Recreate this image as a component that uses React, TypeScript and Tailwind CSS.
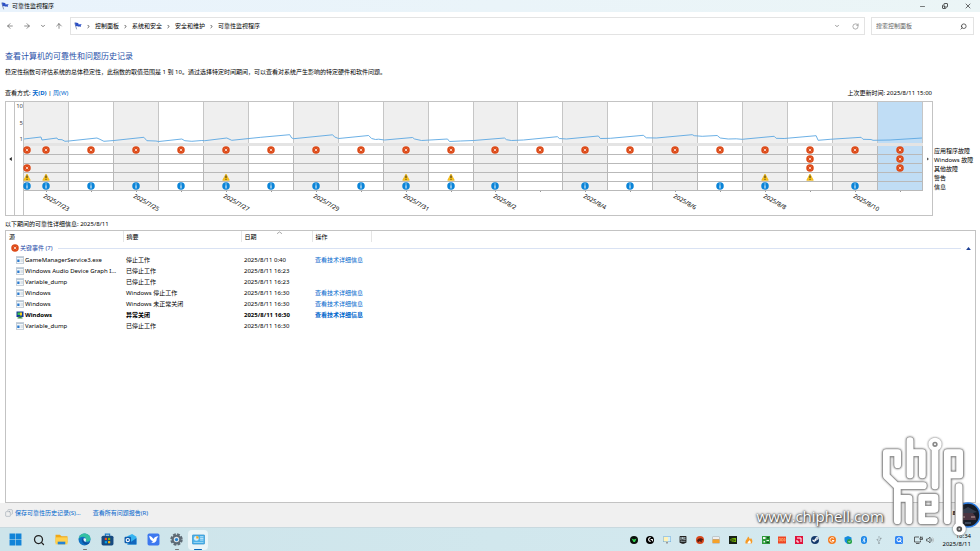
import React, { useState } from "react";
import {
  ArrowLeft,
  ArrowRight,
  ArrowUp,
  ChevronDown,
  ChevronRight,
  Copy,
  Minus,
  RotateCw,
  Search,
  X,
} from "lucide-react";
import { FaBluetoothB, FaSteamSymbol, FaUsb } from "react-icons/fa";
import { SiNvidia, SiLogitechg, SiEpicgames } from "react-icons/si";

type Day = {
  label?: string;
  app?: boolean;
  win?: boolean;
  other?: boolean;
  warn?: boolean;
  info?: boolean;
};

const days: Day[] = [
  { label: "2025/7/23", app: true, warn: true, info: true },
  { app: true, info: true },
  { label: "2025/7/25", app: true, info: true },
  { app: true, info: true },
  { label: "2025/7/27", app: true, warn: true, info: true },
  { app: true, info: true },
  { label: "2025/7/29", app: true, info: true },
  { app: true, info: true },
  { label: "2025/7/31", app: true, warn: true, info: true },
  { app: true, warn: true, info: true },
  { label: "2025/8/2", app: true, info: true },
  { app: true },
  { label: "2025/8/4", app: true, info: true },
  { app: true, info: true },
  { label: "2025/8/6", app: true },
  { app: true, info: true },
  { label: "2025/8/8", app: true, warn: true, info: true },
  { app: true, win: true, other: true, warn: true },
  { label: "2025/8/10", app: true, info: true },
  { app: true, win: true, other: true },
];

const events = [
  { source: "GameManagerService3.exe", summary: "停止工作", date: "2025/8/11 0:40", link: true },
  { source: "Windows Audio Device Graph I...", summary: "已停止工作", date: "2025/8/11 16:23" },
  { source: "Variable_dump", summary: "已停止工作", date: "2025/8/11 16:23" },
  { source: "Windows", summary: "Windows 停止工作", date: "2025/8/11 16:30", link: true },
  { source: "Windows", summary: "Windows 未正常关闭", date: "2025/8/11 16:30", link: true },
  { source: "Windows", summary: "异常关闭", date: "2025/8/11 16:30", link: true, bold: true },
  { source: "Variable_dump", summary: "已停止工作", date: "2025/8/11 16:30" },
];

const stabilityLine =
  "23,139 40,137 41,140 56,138 57,139.5 61,139.7 64,141.3 68,141 96,138 99,139.3 103,141.3 113,140.5 143,137.3 146,140.7 155,141 158,141.5 181,139 184,140.7 191,141.3 201,140.5 204,140.7 226,138 231,140.3 260,137.3 289,134.7 291,138 293,138.7 332,134.8 334,137 338,138.5 368,135.5 371,138.5 375,139.5 378,139.2 384,140 412,137.5 414,139 421,140.5 447,139 449,141.5 460,141 473,140.5 504,138 506,139.7 511,140.5 523,140 557,136.7 559,138.5 566,139 598,136 600,138.5 610,138.3 643,135.3 646,137.8 656,138 692,134.7 694,135.7 702,136.3 717,135.5 720,138 728,139 736,138.8 742,139.3 774,136.3 776,138.3 784,138.5 816,135.7 818,140.3 830,139.3 861,137.3 863,139.3 871,139.5 873,140.3 890,140 922,138";

function Flag() {
  return (
    <svg viewBox="0 0 24 24" className="size-2 shrink-0">
      <path d="M2 2l6 20" stroke="#7c8aa8" strokeWidth="2.5" />
      <path d="M3 2c4-2 6 2 10 1v4c3 1 6-1 10 0l-3 4 1 3c-5 0-6-1-9 0l-2-2-5 1z" fill="#2c50c4" />
    </svg>
  );
}

function ErrorIcon() {
  return (
    <svg viewBox="0 0 16 16" className="size-2 shrink-0">
      <circle cx="8" cy="8" r="7.5" fill="#dd4a18" />
      <path d="M5.500 5.500l5 5m0-5l-5 5" stroke="#ffe9e0" strokeWidth="1.600" />
    </svg>
  );
}

function WarnIcon() {
  return (
    <svg viewBox="0 0 16 16" className="size-2 shrink-0">
      <path d="M8 2l6.5 12.5h-13z" fill="#fcc419" stroke="#eab010" strokeWidth="1.500" strokeLinejoin="round" />
      <path d="M8 5v5m0 1.500v2" stroke="#222" strokeWidth="2" />
    </svg>
  );
}

function InfoIcon() {
  return (
    <svg viewBox="0 0 16 16" className="size-2 shrink-0">
      <circle cx="8" cy="8" r="7.5" fill="#0a84d8" />
      <path d="M8 3v2m0 1.500v6.500" stroke="#fff" strokeWidth="2" />
    </svg>
  );
}

function AppIcon({ bold }: { bold?: boolean }) {
  if (bold) {
    return (
      <svg viewBox="0 0 16 16" className="size-2 shrink-0">
        <rect x="1" y="1" width="14" height="11" fill="#123a9c" />
        <path d="M3 3h5v5H3z" fill="#3fc04a" />
        <path d="M8 3h4v6H8z" fill="#f3d31c" />
        <path d="M5 11h6v2h2v2H3v-2h2z" fill="#3f8c3c" />
      </svg>
    );
  }
  return (
    <svg viewBox="0 0 16 16" className="size-2 shrink-0">
      <rect x="0.500" y="1.500" width="15" height="13" fill="#f4f8fb" stroke="#93a3b3" />
      <path d="M1 2h14v2H1z" fill="#b8c8d6" />
      <rect x="2.500" y="7" width="4.500" height="5" fill="#2b7bd0" />
      <path d="M9 7h5M9 9h5M9 11h5" stroke="#c3ccd4" />
    </svg>
  );
}

function Cell({ children }: { children?: React.ReactNode }) {
  return (
    <div className="flex h-[9px] items-center justify-center border-b border-[#b9b9b9]">
      {children}
    </div>
  );
}

function DayColumn({ day, index }: { day: Day; index: number }) {
  const fill = index === 19 ? "bg-[#c0ddf5]" : index % 2 === 0 ? "bg-[#efefef]" : "bg-white";
  return (
    <div className="relative">
      <div className={`h-[41px] border-r border-[#c6c6c6] ${fill}`} />
      <div className="h-[3px] bg-[#e4e4e4]" />
      <div className={`border-r border-[#b9b9b9] ${fill}`}>
        <Cell>{day.app && <ErrorIcon />}</Cell>
        <Cell>{day.win && <ErrorIcon />}</Cell>
        <Cell>{day.other && <ErrorIcon />}</Cell>
        <Cell>{day.warn && <WarnIcon />}</Cell>
        <Cell>{day.info && <InfoIcon />}</Cell>
      </div>
      {/* events of the day that is cut off at the left edge */}
      {index === 0 && (
        <div className="absolute top-11 -left-px flex flex-col gap-px">
          <ErrorIcon />
          <span className="h-2" />
          <ErrorIcon />
          <WarnIcon />
          <InfoIcon />
        </div>
      )}
      <div className="h-6">
        <div className="mx-auto h-px w-px bg-[#999]" />
        {day.label && (
          <span className="absolute left-1/2 origin-top-left rotate-30 whitespace-nowrap">
            {day.label}
          </span>
        )}
      </div>
    </div>
  );
}

function Chart() {
  return (
    <div className="flex pr-1">
      <div className="flex flex-1 border border-[#c3c3c3] bg-white">
        <button aria-label="向前" className="flex w-[9px] items-center justify-center border-r border-[#c3c3c3]">
          <svg viewBox="0 0 4 6" className="h-1 w-[3px]">
            <path d="M4 0v6L0 3z" fill="#222" />
          </svg>
        </button>
        <div className="flex h-[41px] w-2 flex-col justify-between text-right leading-2 text-[#444]">
          <span className="-ml-1">10</span>
          <span>5</span>
          <span>1</span>
        </div>
        <div className="relative grid flex-1 grid-cols-[repeat(20,minmax(0,1fr))] border-l border-[#c3c3c3]">
          {days.map((day, i) => (
            <DayColumn key={i} day={day} index={i} />
          ))}
          <svg
            viewBox="23 102 900 41"
            preserveAspectRatio="none"
            className="absolute top-0 left-0 h-[41px] w-full"
          >
            <polyline points={stabilityLine} fill="none" stroke="#5ba7e2" strokeWidth="0.9" />
          </svg>
        </div>
        <button aria-label="向后" className="flex w-[9px] items-center justify-center">
          <svg viewBox="0 0 4 6" className="h-1 w-[2px]">
            <path d="M0 0v6l4-3z" fill="#555" />
          </svg>
        </button>
      </div>
      <ul className="w-[43px] pt-[46px] pl-px leading-[9px] whitespace-nowrap">
        <li>应用程序故障</li>
        <li>Windows 故障</li>
        <li>其他故障</li>
        <li>警告</li>
        <li>信息</li>
      </ul>
    </div>
  );
}

function EventTable() {
  const [open, setOpen] = useState(true);
  return (
    <div className="mr-1 flex-1 border border-[#c3c3c3] bg-white">
      <table className="w-full table-fixed border-collapse text-left">
        <thead>
          <tr className="h-[11px]">
            <th className="w-[117px] border-r border-[#e5e5e5] pl-[3px] font-normal">源</th>
            <th className="w-[118px] border-r border-[#e5e5e5] pl-[3px] font-normal">摘要</th>
            <th className="relative w-[71px] border-r border-[#e5e5e5] pl-[3px] font-normal">
              日期
              <svg viewBox="0 0 8 4" className="absolute top-0 left-1/2 h-[3px] w-[5px]">
                <path d="M0 4l4-3 4 3" fill="none" stroke="#777" />
              </svg>
            </th>
            <th className="w-[59px] border-r border-[#e5e5e5] pl-[3px] font-normal">操作</th>
            <th />
          </tr>
        </thead>
        <tbody>
          <tr className="h-3">
            <td colSpan={5}>
              <button
                onClick={() => setOpen(!open)}
                className="flex w-full items-center gap-px pr-1 pl-[5px] text-[#2448a8]"
              >
                <ErrorIcon />
                <span>关键事件 (7)</span>
                <span className="mx-1 h-px flex-1 bg-[#d9e2f3]" />
                <svg viewBox="0 0 8 5" className="h-[3px] w-[5px]">
                  <path d="M0 5l4-5 4 5z" fill="#1c3f94" />
                </svg>
              </button>
            </td>
          </tr>
          {open &&
            events.map((event, i) => (
              <tr key={i} className={`h-[11px] ${event.bold ? "font-bold" : ""}`}>
                <td className="pl-[10px]">
                  <div className="flex items-center gap-px">
                    <AppIcon bold={event.bold} />
                    <span className="whitespace-nowrap">{event.source}</span>
                  </div>
                </td>
                <td className="pl-[3px]">{event.summary}</td>
                <td className="pl-[3px] whitespace-nowrap">{event.date}</td>
                <td className="pl-[3px] whitespace-nowrap">
                  {event.link && (
                    <a href="#" className="text-[#0066cc]">
                      查看技术详细信息
                    </a>
                  )}
                </td>
                <td />
              </tr>
            ))}
        </tbody>
      </table>
    </div>
  );
}

function AddressBar() {
  const crumbs = ["控制面板", "系统和安全", "安全和维护", "可靠性监视程序"];
  return (
    <nav className="flex items-center gap-[6px] px-[6px] pt-[5px]">
      <div className="flex w-[58px] items-center justify-between pr-px text-[#555]">
        <button aria-label="后退"><ArrowLeft className="size-2" /></button>
        <button aria-label="前进"><ArrowRight className="size-2" /></button>
        <button aria-label="最近"><ChevronDown className="size-[6px]" strokeWidth={3} /></button>
        <button aria-label="向上"><ArrowUp className="size-2" /></button>
      </div>
      <div className="flex h-[18px] flex-1 items-center border border-[#e3e3e3] pr-[5px] pl-[3px]">
        <Flag />
        {crumbs.map((crumb) => (
          <React.Fragment key={crumb}>
            <ChevronRight className="mx-1 size-[5px]" strokeWidth={3} />
            <a href="#">{crumb}</a>
          </React.Fragment>
        ))}
        <button aria-label="历史" className="ml-auto text-[#777]"><ChevronDown className="size-[6px]" strokeWidth={3} /></button>
        <button aria-label="刷新" className="ml-3 text-[#777]"><RotateCw className="size-[7px]" /></button>
      </div>
      <label className="flex h-[18px] w-[103px] items-center border border-[#e3e3e3] px-1">
        <input
          type="text"
          aria-label="搜索"
          placeholder="搜索控制面板"
          className="min-w-0 flex-1 outline-none placeholder:text-[#666]"
        />
        <Search className="mr-[2px] size-[7px] -scale-x-100 text-[#333]" strokeWidth={2.5} />
      </label>
    </nav>
  );
}

const pinned = [
  {
    name: "开始",
    icon: (
      <svg viewBox="0 0 24 24" className="size-[13px]">
        <path d="M1 1h10.500v10.500H1zM12.500 1H23v10.500H12.500zM1 12.500h10.500V23H1zM12.500 12.500H23V23H12.500z" fill="#1284d8" />
      </svg>
    ),
  },
  { name: "搜索", icon: <Search className="size-3 text-[#222]" strokeWidth={2.5} /> },
  {
    name: "文件资源管理器",
    icon: (
      <svg viewBox="0 0 24 24" className="size-[13px]">
        <path d="M1 3h8l3 3h11v12H1z" fill="#f0a818" />
        <path d="M1 8h22v13H1z" fill="#ffd04c" />
        <path d="M5 16h14v5H5z" fill="#2583d4" />
      </svg>
    ),
  },
  {
    name: "Edge",
    running: true,
    icon: (
      <svg viewBox="0 0 24 24" className="size-[13px]">
        <circle cx="12" cy="12" r="11" fill="#1173c4" />
        <path d="M1 12C2 4 7 1 12 1c6 0 11 4 11 9 0 4-3 6-6 6-4 0-2-2-2-4 0-3-3-5-6-5-4 0-7 2-8 5z" fill="#35c1a2" />
        <path d="M9 9c-4 4-1 11 6 12 3 0 5-1 7-4-7 3-12-1-11-6z" fill="#0c4f9c" />
        <path d="M10 11c0-2 5-2 5 1 0 2-2 3 1 4-4 1-6-2-6-5z" fill="#e8f6fa" />
      </svg>
    ),
  },
  {
    name: "Microsoft Store",
    icon: (
      <svg viewBox="0 0 24 24" className="size-[13px]">
        <path d="M8 6V2h8v4" fill="none" stroke="#1878c8" strokeWidth="2" />
        <rect x="1" y="5" width="22" height="18" rx="3" fill="#174a80" />
        <path d="M7 9h4v4H7z" fill="#f25022" />
        <path d="M13 9h4v4h-4z" fill="#7fba00" />
        <path d="M7 15h4v4H7z" fill="#00a4ef" />
        <path d="M13 15h4v4h-4z" fill="#ffb900" />
      </svg>
    ),
  },
  {
    name: "Outlook",
    icon: (
      <svg viewBox="0 0 24 24" className="size-[13px]">
        <path d="M6 6l9-4 8 5v14H6z" fill="#35b3f0" />
        <path d="M6 21l17-12v12z" fill="#1267bd" />
        <rect x="1" y="7" width="12" height="12" rx="2" fill="#0f5cae" />
        <circle cx="7" cy="13" r="3" fill="none" stroke="#fff" strokeWidth="2" />
      </svg>
    ),
  },
  {
    name: "迅雷",
    icon: (
      <svg viewBox="0 0 24 24" className="size-[13px]">
        <rect x="1" y="1" width="22" height="22" rx="3" fill="#3c78ef" />
        <path d="M4 5c4 1 6 3 8 6 2-3 4-5 9-5l-3 4c0 6-4 9-10 8l3-3c-4-1-6-4-7-10z" fill="#fff" />
      </svg>
    ),
  },
  {
    name: "设置",
    running: true,
    icon: (
      <svg viewBox="0 0 24 24" className="size-[13px]">
        <circle cx="12" cy="12" r="9.500" fill="none" stroke="#5e6b75" strokeWidth="4" strokeDasharray="5 2.460" />
        <circle cx="12" cy="12" r="7" fill="#dfe5e9" stroke="#5e6b75" strokeWidth="4" />
        <circle cx="12" cy="12" r="3" fill="#2483d0" />
      </svg>
    ),
  },
];

function ControlPanelIcon() {
  return (
    <svg viewBox="0 0 24 24" className="size-[13px]">
      <rect x="0.500" y="3.500" width="23" height="17" rx="1.500" fill="#4db3ea" stroke="#1c7fc0" />
      <circle cx="8" cy="10" r="4.500" fill="#d8effb" />
      <path d="M8 10V5.500A4.500 4.500 0 0112.500 10z" fill="#f2a51c" />
      <path d="M15 7h6M15 10h6M15 13h6" stroke="#dff2fc" strokeWidth="1.500" />
      <path d="M3 17.500h18" stroke="#a8dcf6" strokeWidth="1.500" />
    </svg>
  );
}

function Tray() {
  return (
    <div className="flex w-[254px] items-center justify-between">
      <svg viewBox="0 0 16 16" className="size-2">
        <circle cx="8" cy="8" r="8" fill="#0b0f0b" />
        <path d="M3 5l5 2 5-2-3 7H7z" fill="#2fd04f" />
      </svg>
      <span className="flex size-2 items-center justify-center rounded-full bg-black text-white"><SiLogitechg className="size-[5px]" /></span>
      <svg viewBox="0 0 16 16" className="size-2">
        <path d="M0 1h16v11H0z" fill="#6aa8d8" />
        <path d="M1 2h9v9H1z" fill="#fff2b8" />
        <path d="M10 2h5v9h-5z" fill="#d5effb" />
        <path d="M6 12h4v3H6z" fill="#999" />
      </svg>
      <SiEpicgames className="size-2 text-[#222]" />
      <svg viewBox="0 0 16 16" className="size-2">
        <circle cx="8" cy="8" r="8" fill="#d9481c" />
        <path d="M2 9c3-5 9-6 13-1l-4 1 1 4-5-3-3 3z" fill="#521c12" />
      </svg>
      <svg viewBox="0 0 16 16" className="size-2">
        <path d="M1 1h14v14H1z" fill="#a8a8a8" />
        <path d="M2 2h12v4H2z" fill="#eee" />
        <path d="M1 7h14v7H1z" fill="#f5a22b" />
      </svg>
      <span className="flex size-2 items-center justify-center bg-[#172017] text-[#76b900]"><SiNvidia className="size-[6px]" /></span>
      <svg viewBox="0 0 16 16" className="size-2">
        <path d="M1 15C0 7 5 7 6 1c3 2 3 5 4 6l2-3c4 5 3 9 1 11z" fill="#f79a25" />
        <path d="M5 15c0-4 3-4 4-7 3 3 3 5 2 7z" fill="#fff" />
      </svg>
      <svg viewBox="0 0 16 16" className="size-2">
        <path d="M0 0h16v16H0z" fill="#2f9b3c" />
        <path d="M2 2h5v4H2zM9 8h5v2H9zM3 10h3v3H3z" fill="#eef8ee" />
        <path d="M10 2h4v3h-4zM9 12h5v2H9z" fill="#194d20" />
      </svg>
      <svg viewBox="0 0 16 16" className="size-2">
        <path d="M0 1h16v14H0z" fill="#ef4523" />
        <path d="M2 5h3v5H2zM7 5h3v5H7zM12 5h2v5h-2z" fill="none" stroke="#ffc98a" />
      </svg>
      <svg viewBox="0 0 16 16" className="size-2">
        <path d="M0 0h16v16H0z" fill="#e0133c" />
        <path d="M4 4h8v8M4 8v4h4" fill="none" stroke="#fff" strokeWidth="2" />
      </svg>
      <span className="flex size-2 items-center justify-center rounded-full bg-[#15396b] text-white"><FaSteamSymbol className="size-[7px]" /></span>
      <svg viewBox="0 0 16 16" className="size-2">
        <circle cx="8" cy="8" r="8" fill="#f47b20" />
        <path d="M12 5C8 1 3 5 4 9c1 4 7 4 8 0H8" fill="none" stroke="#fff" strokeWidth="2" />
      </svg>
      <svg viewBox="0 0 16 16" className="size-2">
        <path d="M8 0l7 3v5c0 4-4 7-7 8-3-1-7-4-7-8V3z" fill="#148bdc" />
        <circle cx="11" cy="11" r="5" fill="#25a244" />
        <path d="M9 11l1.500 1.500L13 9.500" fill="none" stroke="#fff" strokeWidth="1.500" />
      </svg>
      <span className="flex h-2 w-[6px] items-center justify-center rounded-full bg-[#1684e8] text-white"><FaBluetoothB className="size-[6px]" /></span>
      <FaUsb className="size-2 -rotate-90 text-[#8c979c]" />
    </div>
  );
}

function Taskbar() {
  return (
    <div className="flex h-6 items-center border-t border-[#c9d9df] bg-linear-to-r from-[#cde4ea] to-[#d5eaf0] pr-[9px] pl-1">
      {pinned.map((item) => (
        <button key={item.name} aria-label={item.name} className="relative flex h-5 w-[23px] items-center justify-center">
          {item.icon}
          {item.running && <span className="absolute bottom-0 h-px w-1 rounded-full bg-[#777]" />}
        </button>
      ))}
      <button aria-label="可靠性监视程序" className="relative flex h-5 w-5 items-center justify-center rounded-sm bg-[#eaf5f8]">
        <ControlPanelIcon />
        <span className="absolute bottom-0 h-px w-2 rounded-full bg-[#0b66b8]" />
      </button>
      <div className="ml-auto flex items-center">
        <Tray />
        <svg viewBox="0 0 16 16" className="ml-[11px] size-2">
          <rect width="16" height="16" rx="3" fill="#3186f5" />
          <circle cx="8" cy="7.500" r="4" fill="none" stroke="#fff" strokeWidth="2" />
          <path d="M9 9l4 4" stroke="#fff" strokeWidth="2" />
        </svg>
        <svg viewBox="0 0 18 16" className="ml-[11px] h-2 w-[9px]" fill="none" stroke="#333" strokeWidth="1.500">
          <path d="M10 2H1v10h12V9M4 15h7" />
          <path d="M13 1v3m3-3v3m-4 0h5v3h-5z" />
        </svg>
        <svg viewBox="0 0 16 16" className="ml-[3px] size-2" fill="none" stroke="#333" strokeWidth="1.300">
          <path d="M1 6h3l4-4v12l-4-4H1z" />
          <path d="M10.500 5c1.500 2 1.500 4 0 6" />
          <path d="M13 3c2.500 3 2.500 7 0 10" stroke="#aaa" />
        </svg>
        <div className="ml-[9px] text-right leading-2">
          <div>16:34</div>
          <div>2025/8/11</div>
        </div>
      </div>
    </div>
  );
}

function Watermark() {
  return (
    <div className="pointer-events-none absolute right-0 bottom-0">
      <div className="absolute right-6 bottom-[30px] h-3 w-4 rounded-l-sm bg-[#f8f8f8] text-right font-bold">8</div>
      <svg viewBox="0 0 26 26" className="absolute -right-px bottom-[23px] size-[26px]">
        <circle cx="13" cy="13" r="12" fill="#151b26" stroke="#2d7fe6" strokeWidth="1.500" />
        <path d="M4 10l9-5 9 5-4 1H8z" fill="#343d4d" />
        <path d="M5 15l3-4h10l3 4v3H5z" fill="#4b3440" />
        <path d="M6 15h4m6 0h4" stroke="#c8a5a0" />
        <path d="M10 21h6" stroke="#64748b" />
      </svg>
      <span className="absolute right-24 bottom-[25px] font-['Open_Sans'] text-[15px] leading-5 font-medium text-white [text-shadow:0_0_2px_#333,1px_1px_2px_#333,0_0_3px_#777]">
        www.chiphell.com
      </span>
      <svg
        viewBox="0 0 315 363"
        className="relative h-[121px] w-[105px] drop-shadow-[0_0_1px_#555]"
        fill="none"
        stroke="#fff"
        strokeWidth="20"
        strokeLinejoin="round"
        strokeLinecap="round"
      >
        <g stroke="#999" strokeWidth="24">
          <path d="M68 104V68H34V138L67 170V272M67 167H145M102 272V205H70" />
          <path d="M105 32V135M108 68H142V135M180 60V168M217 272V68H254V135H228M252 170V285" />
          <path d="M178 272H140V202H180V238H150" />
        </g>
        <path d="M68 104V68H34V138L67 170V272M67 167H145M102 272V205H70" />
        <path d="M105 32V135M108 68H142V135M180 60V168M217 272V68H254V135H228M252 170V285" />
        <path d="M178 272H140V202H180V238H150" />
        <circle cx="180" cy="43" r="14" fill="#888" strokeWidth="12" />
        <circle cx="180" cy="43" r="3" fill="#fff" stroke="none" />
        <circle cx="253" cy="297" r="14" fill="#555" strokeWidth="11" />
        <circle cx="253" cy="297" r="3" fill="#ccc" stroke="none" />
      </svg>
    </div>
  );
}

function App() {
  return (
    <div
      lang="zh-CN"
      className="relative flex h-screen flex-col overflow-hidden bg-white font-['Noto_Sans','Noto_Sans_CJK_SC',sans-serif] text-[6px] leading-2 text-black"
    >
      <header className="flex h-3 items-center gap-[3px] bg-linear-to-r from-[#e9f3fc] to-[#ebf5f6] pr-2 pl-px">
        <Flag />
        <span>可靠性监视程序</span>
        <div className="ml-auto flex gap-4 text-[#222]">
          <button aria-label="最小化"><Minus className="size-[7px]" /></button>
          <button aria-label="还原"><Copy className="size-[6px] -scale-y-100" strokeWidth={3} /></button>
          <button aria-label="关闭"><X className="size-2" /></button>
        </div>
      </header>
      <AddressBar />
      <main className="flex flex-1 flex-col pt-4 pl-[5px]">
        <h1 className="text-[8px] leading-[10px] text-[#1f4fa8]">查看计算机的可靠性和问题历史记录</h1>
        <p className="mt-[7px]">
          稳定性指数可评估系统的总体稳定性，此指数的取值范围是 1 到 10。通过选择特定时间期间，可以查看对系统产生影响的特定硬件和软件问题。
        </p>
        <div className="mt-[13px] mb-1 flex justify-between pr-12">
          <span>
            查看方式: <a href="#" className="font-bold text-[#0066cc]">天(D)</a> |{" "}
            <a href="#" className="text-[#0066cc]">周(W)</a>
          </span>
          <span>上次更新时间: 2025/8/11 15:00</span>
        </div>
        <Chart />
        <p className="mt-1 mb-[2px]">以下期间的可靠性详细信息: 2025/8/11</p>
        <EventTable />
      </main>
      <footer className="flex h-6 items-center bg-[#f0f0f0] pb-1 pl-[5px] text-[#0066cc]">
        <Copy className="mr-[2px] size-2 -scale-x-100 text-[#8a97a3]" strokeWidth={1.5} />
        <a href="#">保存可靠性历史记录(S)...</a>
        <a href="#" className="ml-3">查看所有问题报告(R)</a>
      </footer>
      <Taskbar />
      <Watermark />
    </div>
  );
}

export default App;
